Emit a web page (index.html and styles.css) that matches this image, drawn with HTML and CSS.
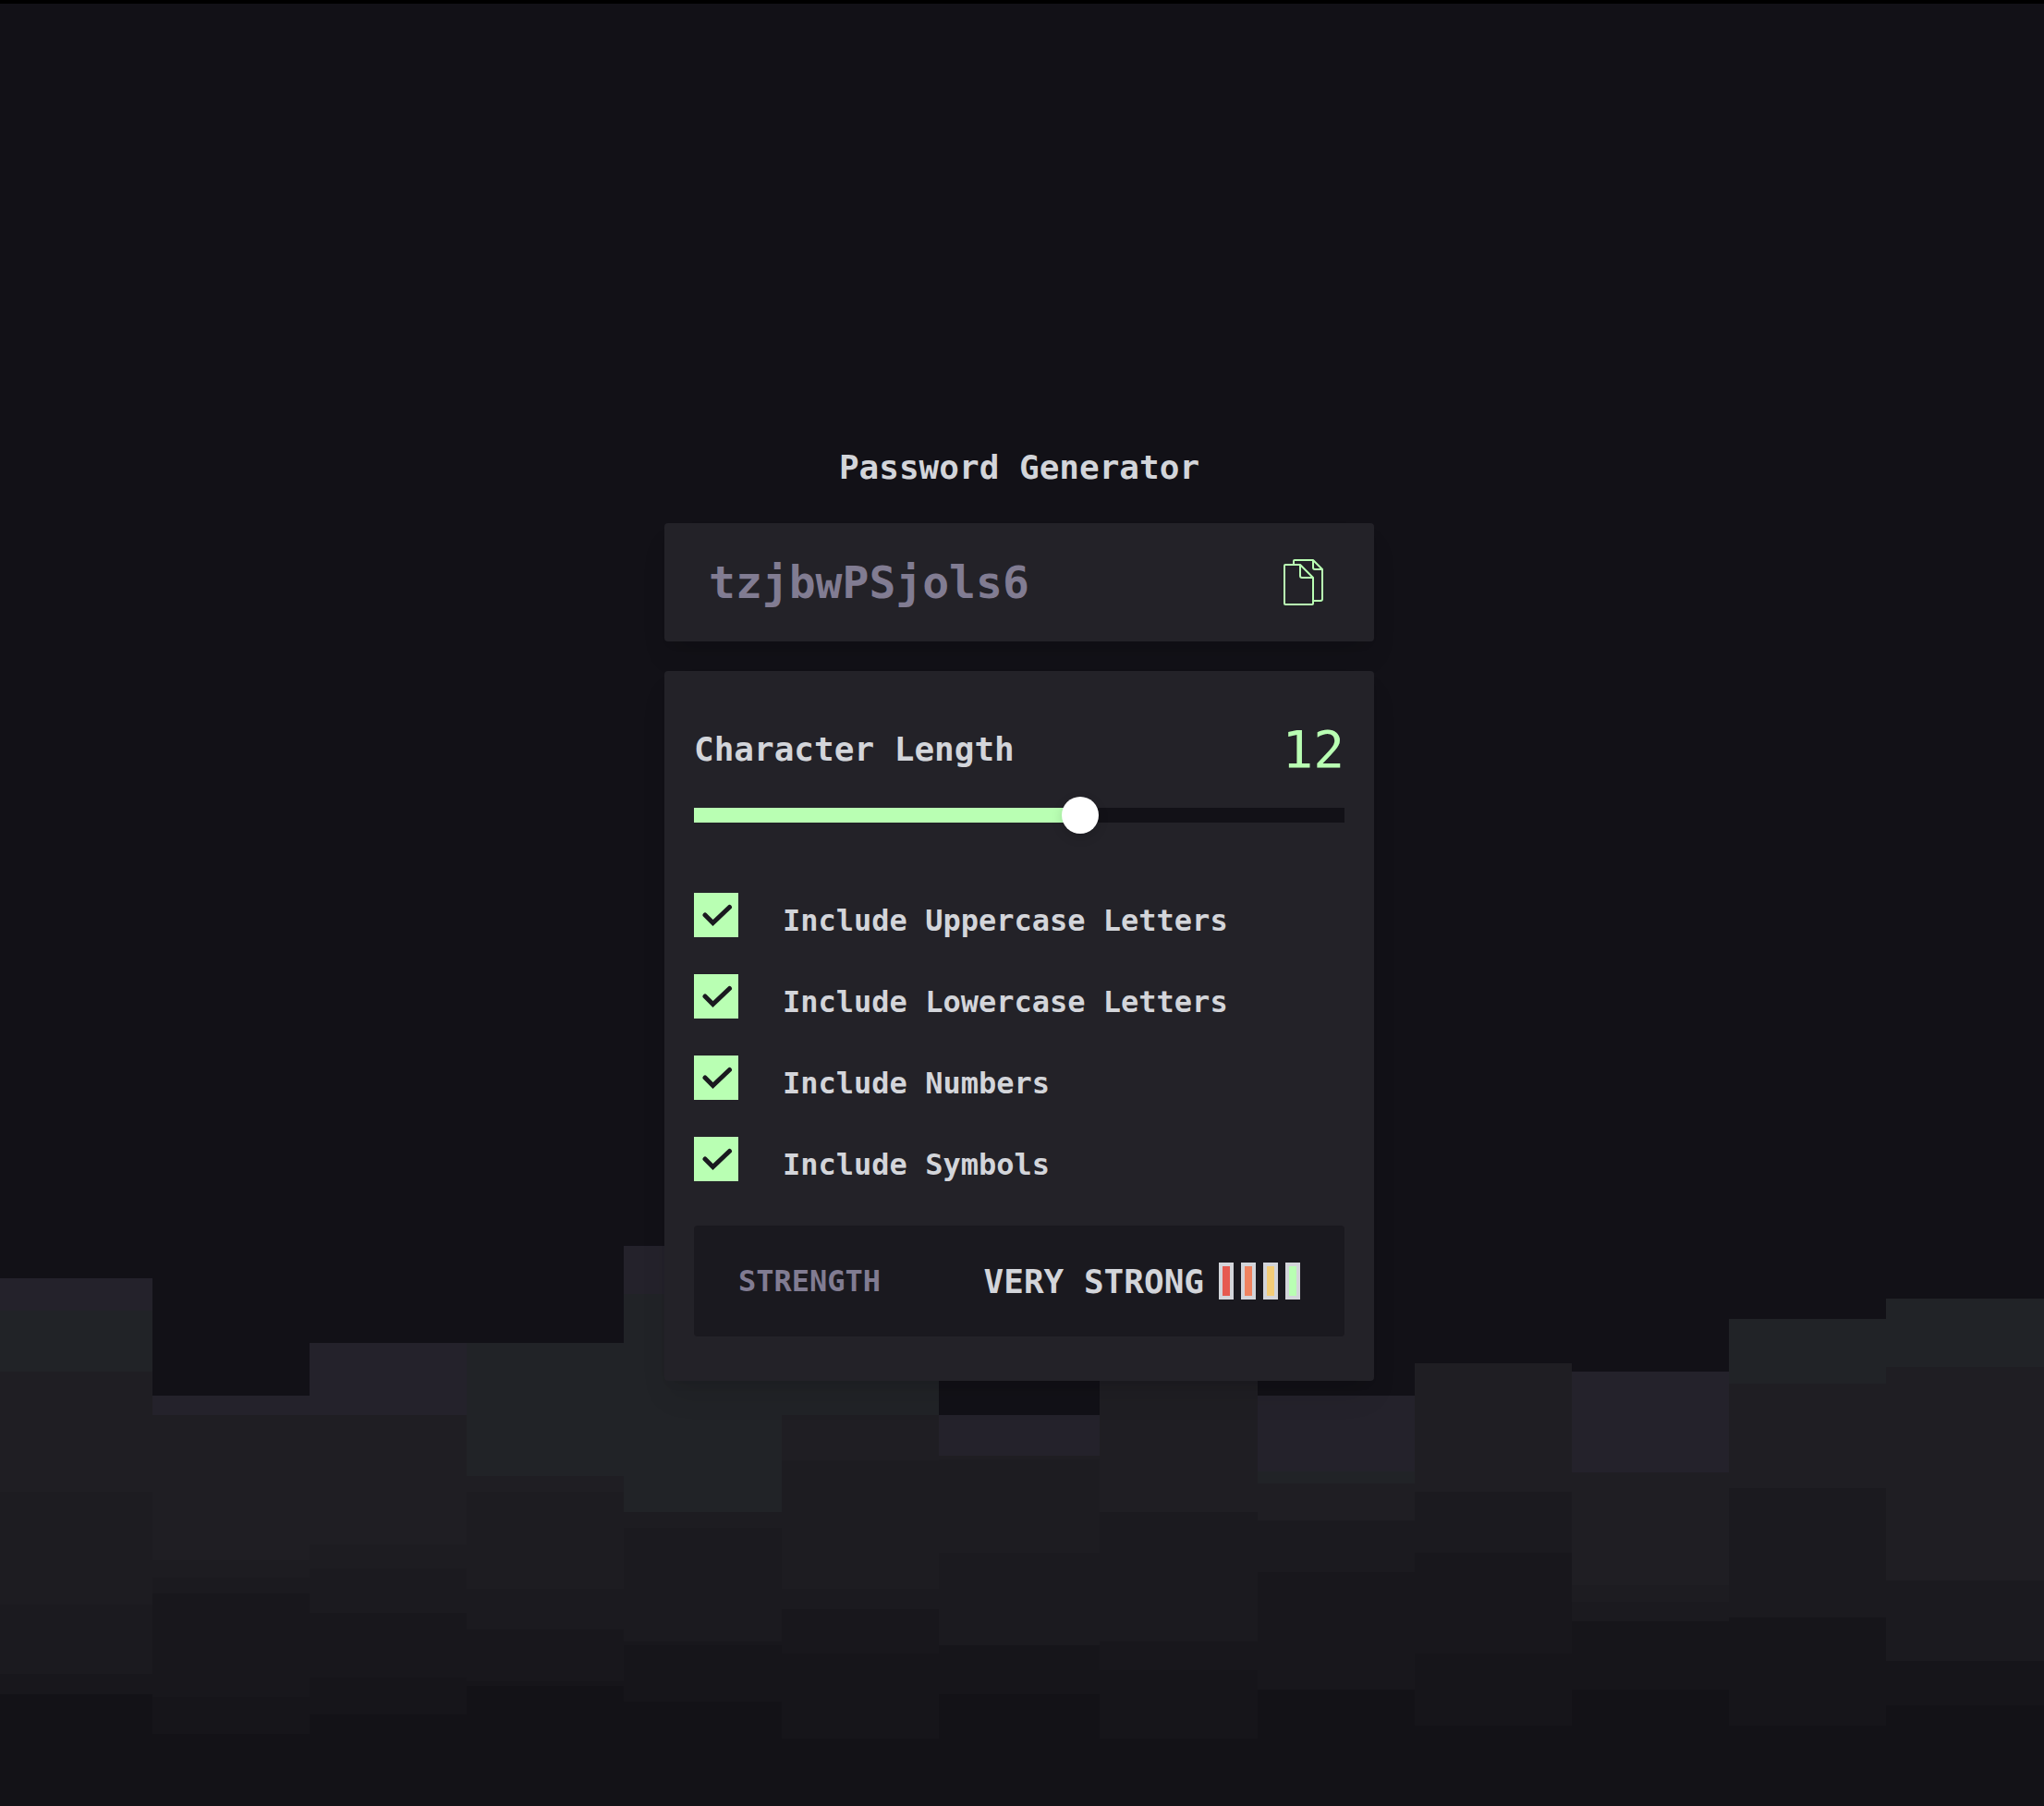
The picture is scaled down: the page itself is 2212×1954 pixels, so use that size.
FILE: index.html
```html
<!DOCTYPE html>
<html lang="en">
<head>
<meta charset="utf-8">
<meta name="viewport" content="width=device-width, initial-scale=1">
<title>Password Generator</title>
<link rel="stylesheet" href="styles.css">
</head>
<body>
<svg class="skyline" viewBox="0 1340 2212 614" preserveAspectRatio="none" aria-hidden="true">
  <path fill="#24222b" d="M0 1383H165V1510H335V1453H505V1453H675V1348H846V1348H1016V1531H1190V1400H1361V1510H1531V1475H1701V1484H1871V1427H2041V1405H2212V1954H0Z"/>
  <path fill="#212327" d="M0 1418H165V1531H335V1531H505V1453H675V1400H846V1400H1016V1575H1190V1400H1361V1592H1531V1475H1701V1593H1871V1427H2041V1405H2212V1954H0Z"/>
  <path fill="#1f1e23" d="M0 1484H165V1531H335V1531H505V1597H675V1636H846V1531H1016V1575H1190V1400H1361V1605H1531V1475H1701V1593H1871V1497H2041V1479H2212V1954H0Z"/>
  <path fill="#1d1c21" d="M0 1614H165V1688H335V1671H505V1614H675V1636H846V1580H1016V1579H1190V1636H1361V1645H1531V1614H1701V1715H1871V1610H2041V1710H2212V1954H0Z"/>
  <path fill="#1b1a1f" d="M0 1736H165V1707H335V1697H505V1719H675V1653H846V1719H1016V1680H1190V1636H1361V1645H1531V1614H1701V1733H1871V1610H2041V1710H2212V1954H0Z"/>
  <path fill="#18171c" d="M0 1811H165V1724H335V1745H505V1763H675V1776H846V1741H1016V1780H1190V1776H1361V1701H1531V1680H1701V1754H1871V1750H2041V1797H2212V1954H0Z"/>
  <path fill="#16151a" d="M0 1833H165V1836H335V1815H505V1819H675V1780H846V1789H1016V1780H1190V1807H1361V1828H1531V1789H1701V1754H1871V1750H2041V1797H2212V1954H0Z"/>
  <path fill="#131217" d="M0 1833H165V1876H335V1855H505V1824H675V1841H846V1881H1016V1833H1190V1881H1361V1828H1531V1867H1701V1828H1871V1867H2041V1845H2212V1954H0Z"/>
</svg>
<main class="generator">
  <h1 class="title">Password Generator</h1>
  <section class="card password">
    <output class="password-value">tzjbwPSjols6</output>
    <button class="copy" type="button" aria-label="Copy password">
      <svg viewBox="0 0 46 52" aria-hidden="true">
        <path d="M12 6V3q0-1 1-1H33L43 12V44q0 2-2 2H34M33 2V10q0 2 2 2H43"/>
        <path d="M3 7H19L33 21V49q0 1-1 1H3q-1 0-1-1V8q0-1 1-1ZM19 7V19q0 2 2 2H33"/>
      </svg>
    </button>
  </section>
  <form class="card settings">
    <div class="length">
      <label class="length-label" for="length">Character Length</label>
      <output class="length-value" for="length">12</output>
    </div>
    <input class="slider" id="length" type="range" min="0" max="20" value="12">
    <ul class="options">
      <li class="option"><input class="tick" type="checkbox" id="upper" checked><label for="upper">Include Uppercase Letters</label></li>
      <li class="option"><input class="tick" type="checkbox" id="lower" checked><label for="lower">Include Lowercase Letters</label></li>
      <li class="option"><input class="tick" type="checkbox" id="numbers" checked><label for="numbers">Include Numbers</label></li>
      <li class="option"><input class="tick" type="checkbox" id="symbols" checked><label for="symbols">Include Symbols</label></li>
    </ul>
    <div class="strength">
      <span class="strength-label">STRENGTH</span>
      <div class="rating">
        <span class="rating-text">VERY STRONG</span>
        <div class="meter">
          <span class="bar bar-red"></span>
          <span class="bar bar-orange"></span>
          <span class="bar bar-yellow"></span>
          <span class="bar bar-green"></span>
        </div>
      </div>
    </div>
  </form>
</main>
</body>
</html>
```

FILE: styles.css
```css
:root {
  --page: #121117;
  --panel: #232228;
  --inset: #1a191f;
  --text: #d3d5da;
  --muted: #817c92;
  --green: #b9ffb3;
}

* {
  box-sizing: border-box;
}

body {
  margin: 0;
  min-height: 100vh;
  display: grid;
  border-top: 4px solid #000;
  background: var(--page);
  color: var(--text);
  font-family: "DejaVu Sans Mono", "Liberation Mono", monospace;
  font-weight: 700;
}

.skyline {
  grid-area: 1 / 1;
  align-self: end;
  width: 100%;
  height: 614px;
  shape-rendering: crispEdges;
}

.generator {
  grid-area: 1 / 1;
  place-self: center;
  width: 100%;
  max-width: 768px;
  margin-right: 6px;
  padding-top: 18px;
  z-index: 1;
}

.title {
  margin: 0 0 36px;
  font-size: 36px;
  line-height: 48px;
  text-align: center;
}

.card {
  border-radius: 4px;
  background: var(--panel);
  box-shadow: 0 20px 30px -6px rgb(0 0 0 / 0.1), 0 8px 12px -8px rgb(0 0 0 / 0.1);
}

.password {
  display: flex;
  align-items: center;
  justify-content: space-between;
  height: 128px;
  margin-bottom: 32px;
  padding: 0 53px 0 48px;
  color: var(--muted);
  font-size: 48px;
  line-height: 64px;
}

.copy {
  display: flex;
  padding: 0;
  border: 0;
  background: none;
  cursor: pointer;
}

.copy svg {
  width: 46px;
  height: 52px;
  fill: none;
  stroke: var(--green);
  stroke-width: 2;
  stroke-linejoin: round;
}

.settings {
  padding: 48px 32px;
}

.length {
  display: flex;
  align-items: center;
  justify-content: space-between;
  height: 72px;
  font-size: 36px;
}

.length-value {
  color: var(--green);
  font-size: 56px;
  font-weight: 400;
}

.slider {
  appearance: none;
  display: block;
  width: 100%;
  height: 40px;
  margin: 16px 0 64px;
  background: linear-gradient(90deg, var(--green) 60%, var(--page) 60%) center / 100% 16px no-repeat;
}

.slider::-webkit-slider-thumb {
  appearance: none;
  width: 40px;
  height: 40px;
  border-radius: 50%;
  background: #fff;
  box-shadow: 0 4px 12px rgb(0 0 0 / 0.15);
}

.options {
  display: grid;
  gap: 40px;
  margin: 0 0 48px;
  padding: 0;
  list-style: none;
}

.option {
  display: flex;
  gap: 48px;
  height: 48px;
  font-size: 32px;
  line-height: 60px;
}

.tick {
  appearance: none;
  flex: none;
  width: 48px;
  height: 48px;
  margin: 0;
}

.tick:checked {
  background: var(--green) url("data:image/svg+xml,%3Csvg xmlns='http://www.w3.org/2000/svg' viewBox='0 0 48 48' fill='none' stroke='%231a191f' stroke-width='5' stroke-linecap='round'%3E%3Cpath d='M12 24L20.500 32.500L38.500 15.500'/%3E%3C/svg%3E");
}

.strength {
  display: flex;
  align-items: center;
  justify-content: space-between;
  height: 120px;
  padding: 0 48px;
  border-radius: 4px;
  background: var(--inset);
}

.strength-label {
  color: var(--muted);
  font-size: 32px;
}

.rating,
.meter {
  display: flex;
  align-items: center;
}

.rating {
  gap: 16px;
  font-size: 36px;
}

.meter {
  gap: 8px;
}

.bar {
  width: 16px;
  height: 40px;
  border: 4px solid var(--text);
}

.bar-red {
  background: #e65a50;
}

.bar-orange {
  background: #ef8360;
}

.bar-yellow {
  background: #f3cd78;
}

.bar-green {
  background: var(--green);
}
```
